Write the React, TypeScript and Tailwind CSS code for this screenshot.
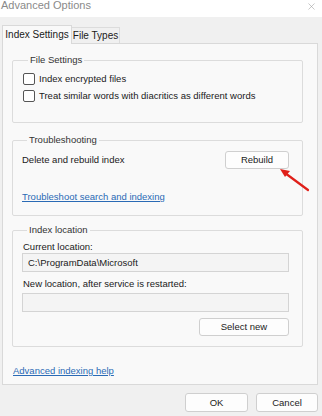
import { X } from 'lucide-react'

const font = { fontFamily: '"Liberation Sans", Arial, sans-serif' }

function Checkbox({ label }: { label: string }) {
  return (
    <div className="flex h-[17px] items-center">
      <span className="h-[12px] w-[12px] shrink-0 rounded-[2px] border border-[#555] bg-white" />
      <span className="ml-[4px] whitespace-nowrap">{label}</span>
    </div>
  )
}

function WinButton({ children, className }: { children: React.ReactNode; className: string }) {
  return (
    <button className={`flex shrink-0 items-center justify-center rounded-[3px] border border-[#cfcfcf] bg-[#fdfdfd] text-[#1b1b1b] ${className}`}>
      {children}
    </button>
  )
}

export default function App() {
  return (
    <div className="relative h-[416px] w-[322px] overflow-hidden bg-[#f0f0f0] text-[9.5px] leading-[14px] text-[#1a1a1a]" style={font}>
      {/* Title bar */}
      <div className="flex h-[17px] items-start justify-between bg-white">
        <span className="-mt-[2px] ml-[1px] text-[11px] leading-[14px] text-[#8a8a8a]">Advanced Options</span>
        <X className="mr-[5px] mt-[1px] h-[11px] w-[11px] text-[#9a9a9a]" strokeWidth={1.2} />
      </div>

      {/* Tabs */}
      <div className="ml-[2px] mt-[8px] flex h-[18px] items-end">
        <div className="relative z-10 -mb-px flex h-[19px] w-[70px] items-center justify-center whitespace-nowrap border border-b-0 border-[#d9d9d9] bg-[#f9f9f9] text-[10px]">
          Index Settings
        </div>
        <div className="flex h-[16px] w-[48px] items-center justify-center whitespace-nowrap border border-b-0 border-l-0 border-[#dcdcdc] bg-[#f0f0f0] text-[10px]">
          File Types
        </div>
      </div>

      {/* Panel */}
      <div className="relative ml-[2px] h-[342px] w-[316px] border border-[#d9d9d9] bg-[#f9f9f9] pl-[9px] pr-[14px]">
        <fieldset className="mt-[9px] h-[70px] rounded-[2px] border border-[#dcdcdc] pl-[10px]">
          <legend className="ml-[5px] px-[2px] text-[#333]">File Settings</legend>
          <div className="mt-[3px]">
            <Checkbox label="Index encrypted files" />
            <Checkbox label="Treat similar words with diacritics as different words" />
          </div>
        </fieldset>

        <fieldset className="mt-[10px] h-[83px] rounded-[2px] border border-[#dcdcdc] pl-[9px] pr-[13px]">
          <legend className="ml-[5px] px-[2px] text-[#333]">Troubleshooting</legend>
          <div className="mt-[4px] flex items-center justify-between">
            <span>Delete and rebuild index</span>
            <WinButton className="h-[18px] w-[64px]">Rebuild</WinButton>
          </div>
          <div className="mt-[21px]">
            <a className="text-[#2a6ab5] underline">Troubleshoot search and indexing</a>
          </div>
        </fieldset>

        <fieldset className="mt-[7px] h-[124px] rounded-[2px] border border-[#dcdcdc] pl-[9px] pr-[13px]">
          <legend className="ml-[5px] px-[2px] text-[#333]">Index location</legend>
          <div className="mt-[4px] pl-[1px] leading-[12px]">Current location:</div>
          <div className="flex h-[19px] items-center border border-[#d4d4d4] bg-[#f4f4f4] pl-[5px]">
            C:\ProgramData\Microsoft
          </div>
          <div className="mt-[6px] pl-[1px] leading-[12px]">New location, after service is restarted:</div>
          <div className="mt-[3px] h-[19px] border border-[#d4d4d4] bg-[#f4f4f4]" />
          <div className="mt-[6px] flex justify-end">
            <WinButton className="h-[18px] w-[90px]">Select new</WinButton>
          </div>
        </fieldset>

        <div className="ml-[1px] mt-[17px]">
          <a className="text-[#2a6ab5] underline">Advanced indexing help</a>
        </div>

        {/* red annotation arrow */}
        <svg className="absolute left-[270px] top-[120px] h-[30px] w-[40px]" viewBox="0 0 40 30">
          <line x1="35" y1="26" x2="12" y2="9" stroke="#e0201a" strokeWidth="2.2" strokeLinecap="round" />
          <polygon points="7,5 17,7 12,13" fill="#e0201a" />
        </svg>
      </div>

      {/* Footer buttons */}
      <div className="mt-[8px] flex justify-end gap-[8px] pr-[4px]">
        <WinButton className="h-[19px] w-[63px]">OK</WinButton>
        <WinButton className="h-[19px] w-[62px]">Cancel</WinButton>
      </div>
    </div>
  )
}
